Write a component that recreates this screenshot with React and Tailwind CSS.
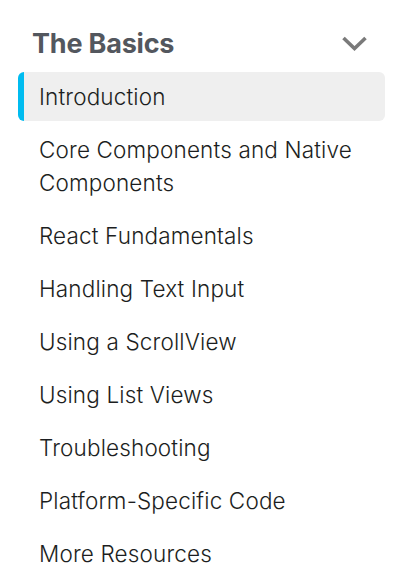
import React from 'react';

const items = [
  'Introduction',
  'Core Components and Native Components',
  'React Fundamentals',
  'Handling Text Input',
  'Using a ScrollView',
  'Using List Views',
  'Troubleshooting',
  'Platform-Specific Code',
  'More Resources',
];

export default function App() {
  return (
    <div className="min-h-screen bg-white pt-[24px]" style={{ fontFamily: 'Inter, "Noto Sans", sans-serif' }}>
      <nav className="ml-[18px] w-[367px]">
        <div className="flex items-center justify-between pl-[14px] pr-[18px] h-[40px]">
          <h2 className="text-[27px] font-bold text-[#53575e] tracking-[-0.2px]">The Basics</h2>
          <svg width="25" height="15" viewBox="0 0 25 15" className="-mt-[2px] text-[#7a7a7a]">
            <polyline points="1.5,2 12.5,12.5 23.5,2" fill="none" stroke="currentColor" strokeWidth="3.6" />
          </svg>
        </div>
        <ul className="mt-[8px] flex flex-col gap-[3.8px]">
          {items.map((label, i) => (
            <li
              key={label}
              className={`rounded-md border-l-[6px] py-[7.75px] pl-[15px] pr-2 text-[22.5px] font-light leading-[33.7px] tracking-[0.15px] text-[#1c1e21] ${
                i === 0 ? 'border-[#00bcf0] bg-[#efefef]' : 'border-transparent'
              }`}
            >
              {label}
            </li>
          ))}
        </ul>
      </nav>
    </div>
  );
}
